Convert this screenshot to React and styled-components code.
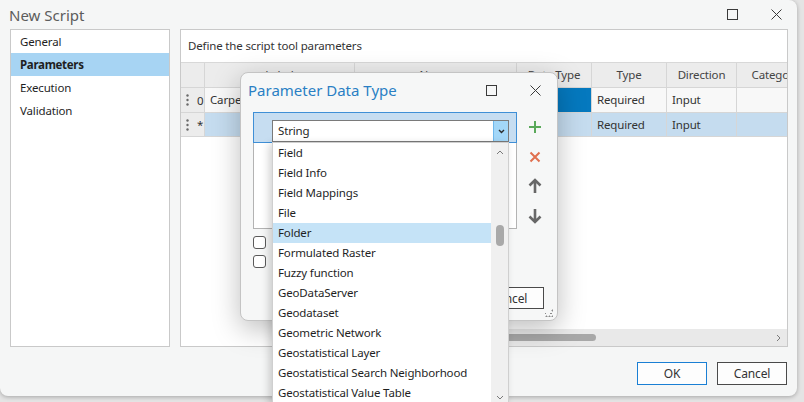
import React from "react";
import { createGlobalStyle, styled } from "styled-components";

const GlobalStyle = createGlobalStyle`
  html, body {
    margin: 0;
    padding: 0;
  }
  body {
    background: #e4e4e4;
    font-family: "Noto Sans", "Open Sans", sans-serif;
    font-size: 11.5px;
    letter-spacing: -0.15px;
    color: #1f1f1f;
  }
`;

const COLUMNS = [
  { title: "Label", width: 150 },
  { title: "Name", width: 162 },
  { title: "Data Type", width: 75 },
  { title: "Type", width: 75 },
  { title: "Direction", width: 70 },
  { title: "Category", width: 78 },
];

const ROWS = [
  { id: "0", cells: ["Carpeta", "", "", "Required", "Input", ""], selected: false },
  { id: "*", cells: ["", "", "", "Required", "Input", ""], selected: true },
];

const DATA_TYPES = [
  "Field",
  "Field Info",
  "Field Mappings",
  "File",
  "Folder",
  "Formulated Raster",
  "Fuzzy function",
  "GeoDataServer",
  "Geodataset",
  "Geometric Network",
  "Geostatistical Layer",
  "Geostatistical Search Neighborhood",
  "Geostatistical Value Table",
];

const NAV = ["General", "Parameters", "Execution", "Validation"];

const gridTemplate = `24px ${COLUMNS.map((c) => `${c.width}px`).join(" ")}`;

const App = () => {
  return (
    <Page>
      <GlobalStyle />
      <Window>
        <TitleBar>
          <Title>New Script</Title>
          <WindowControls>
            <MaximizeIcon />
            <CloseIcon />
          </WindowControls>
        </TitleBar>

        <Body>
          <Nav>
            {NAV.map((item) => (
              <NavItem key={item} $active={item === "Parameters"}>
                {item}
              </NavItem>
            ))}
          </Nav>

          <Panel>
            <Caption>Define the script tool parameters</Caption>
            <Grid>
              <HeaderCell />
              {COLUMNS.map((c) => (
                <HeaderCell key={c.title}>{c.title}</HeaderCell>
              ))}
              {ROWS.map((row) => (
                <React.Fragment key={row.id}>
                  <HandleCell $tall={!row.selected}>
                    <DotsIcon />
                    <span>{row.id}</span>
                  </HandleCell>
                  {row.cells.map((text, i) => (
                    <Cell
                      key={i}
                      $tall={!row.selected}
                      $selected={row.selected}
                      $focused={!row.selected && i === 2}
                    >
                      {text}
                    </Cell>
                  ))}
                </React.Fragment>
              ))}
            </Grid>
            <GridFill />
            <HScroll>
              <HThumb />
              <ChevronRight />
            </HScroll>
          </Panel>
        </Body>

        <Footer>
          <Button $primary>OK</Button>
          <Button>Cancel</Button>
        </Footer>
      </Window>

      <Dialog>
        <DialogTitleBar>
          <DialogTitle>Parameter Data Type</DialogTitle>
          <WindowControls>
            <MaximizeIcon />
            <CloseIcon />
          </WindowControls>
        </DialogTitleBar>

        <DialogBody>
          <ListColumn>
            <ListBox>
              <ListRow>
                <Combo>
                  <ComboText>String</ComboText>
                  <ComboButton>
                    <ChevronDown />
                  </ComboButton>
                </Combo>
              </ListRow>
            </ListBox>
            <CheckBox />
            <CheckBox />
          </ListColumn>

          <ToolColumn>
            <ToolSlot>
              <PlusIcon />
            </ToolSlot>
            <ToolSlot>
              <DeleteIcon />
            </ToolSlot>
            <ToolSlot>
              <ArrowIcon />
            </ToolSlot>
            <ToolSlot>
              <ArrowIcon $down />
            </ToolSlot>
          </ToolColumn>
        </DialogBody>

        <DialogFooter>
          <SmallButton $primary>OK</SmallButton>
          <SmallButton>Cancel</SmallButton>
        </DialogFooter>
        <Grip />

        <Dropdown>
          <DropList>
            {DATA_TYPES.map((t) => (
              <DropItem key={t} $active={t === "Folder"}>
                {t}
              </DropItem>
            ))}
          </DropList>
          <VScroll>
            <ChevronUp />
            <VThumb />
            <ChevronDownSmall />
          </VScroll>
        </Dropdown>
      </Dialog>
    </Page>
  );
};

/* icons */

const MaximizeIcon = () => (
  <svg width="11" height="11" viewBox="0 0 11 11">
    <rect x="0.5" y="0.5" width="10" height="10" fill="none" stroke="#3a3a3a" strokeWidth="1" />
  </svg>
);

const CloseIcon = () => (
  <svg width="11" height="11" viewBox="0 0 11 11">
    <path d="M0.5 0.5 L10.5 10.5 M10.5 0.5 L0.5 10.5" stroke="#3a3a3a" strokeWidth="1" />
  </svg>
);

const DotsIcon = () => (
  <svg width="3" height="12" viewBox="0 0 3 12">
    <circle cx="1.5" cy="1.5" r="1.2" fill="#6a6a6a" />
    <circle cx="1.5" cy="6" r="1.2" fill="#6a6a6a" />
    <circle cx="1.5" cy="10.5" r="1.2" fill="#6a6a6a" />
  </svg>
);

const ChevronDown = () => (
  <svg width="7" height="5" viewBox="0 0 7 5">
    <path d="M1 1 L3.5 3.5 L6 1" fill="none" stroke="#2b2b2b" strokeWidth="1.4" />
  </svg>
);

const ChevronUp = () => (
  <svg width="8" height="5" viewBox="0 0 8 5" style={{ marginTop: 7 }}>
    <path d="M1 4 L4 1 L7 4" fill="none" stroke="#7a7a7a" strokeWidth="1" />
  </svg>
);

const ChevronDownSmall = () => (
  <svg width="8" height="5" viewBox="0 0 8 5" style={{ marginBottom: 3 }}>
    <path d="M1 1 L4 4 L7 1" fill="none" stroke="#7a7a7a" strokeWidth="1" />
  </svg>
);

const ChevronRight = () => (
  <svg width="5" height="8" viewBox="0 0 5 8">
    <path d="M1 1 L4 4 L1 7" fill="none" stroke="#7a7a7a" strokeWidth="1" />
  </svg>
);

const PlusIcon = () => (
  <svg width="14" height="14" viewBox="0 0 14 14">
    <path d="M7 1 V13 M1 7 H13" stroke="#5aa95a" strokeWidth="2" />
  </svg>
);

const DeleteIcon = () => (
  <svg width="12" height="12" viewBox="0 0 12 12">
    <path d="M1.5 1.5 L10.5 10.5 M10.5 1.5 L1.5 10.5" stroke="#e0704f" strokeWidth="2" />
  </svg>
);

const ArrowIcon = ({ $down }) => (
  <svg
    width="14"
    height="16"
    viewBox="0 0 14 16"
    style={{ transform: $down ? "rotate(180deg)" : "none" }}
  >
    <path d="M7 15 V2 M1.5 7.5 L7 2 L12.5 7.5" fill="none" stroke="#676767" strokeWidth="2.6" />
  </svg>
);

/* main window */

const Page = styled.div`
  position: relative;
  width: 804px;
  height: 402px;
  overflow: hidden;
`;

const Window = styled.div`
  width: 797px;
  height: 396px;
  background: #f5f6f6;
  border-radius: 0 8px 8px 8px;
  box-shadow: 0 1px 4px rgba(0, 0, 0, 0.28);
  display: flex;
  flex-direction: column;
  box-sizing: border-box;
`;

const TitleBar = styled.div`
  height: 29px;
  display: flex;
  align-items: center;
  padding: 0 15px 0 9px;
`;

const Title = styled.div`
  flex: 1;
  font-size: 15px;
  letter-spacing: 0;
  color: #5c5c5c;
`;

const WindowControls = styled.div`
  display: flex;
  align-items: center;
  gap: 33px;

  svg {
    display: block;
  }
`;

const Body = styled.div`
  display: flex;
  gap: 10px;
  padding: 0 9px 0 10px;
  height: 318px;
`;

const Nav = styled.div`
  width: 160px;
  box-sizing: border-box;
  background: #fff;
  border: 1px solid #c9c9c9;
`;

const NavItem = styled.div`
  height: 23px;
  line-height: 23px;
  padding-left: 9px;
  font-weight: ${(p) => (p.$active ? 700 : 400)};
  letter-spacing: ${(p) => (p.$active ? "-0.3px" : "-0.15px")};
  background: ${(p) => (p.$active ? "#a7d4f3" : "transparent")};
`;

const Panel = styled.div`
  flex: 1;
  min-width: 0;
  background: #fff;
  border: 1px solid #c9c9c9;
  display: flex;
  flex-direction: column;
  overflow: hidden;
`;

const Caption = styled.div`
  height: 32px;
  line-height: 32px;
  padding-left: 7px;
  color: #333;
  border-bottom: 1px solid #d8d8d8;
`;

const Grid = styled.div`
  display: grid;
  grid-template-columns: ${gridTemplate};
  width: max-content;
`;

const HeaderCell = styled.div`
  height: 24px;
  line-height: 24px;
  text-align: center;
  background: #ececec;
  color: #444;
  border-right: 1px solid #d6d6d6;
  border-bottom: 1px solid #d6d6d6;
  white-space: nowrap;
  overflow: hidden;
`;

const HandleCell = styled.div`
  height: ${(p) => (p.$tall ? 24 : 23)}px;
  display: flex;
  align-items: center;
  gap: 8px;
  padding-left: 5px;
  background: #ececec;
  color: #333;
  border-right: 1px solid #d6d6d6;
  border-bottom: 1px solid #d6d6d6;

  svg {
    display: block;
  }
`;

const Cell = styled.div`
  height: ${(p) => (p.$tall ? 24 : 23)}px;
  line-height: ${(p) => (p.$tall ? 24 : 23)}px;
  padding-left: 5px;
  color: #333;
  white-space: nowrap;
  overflow: hidden;
  background: ${(p) => (p.$focused ? "#0579bf" : p.$selected ? "#c5dcef" : "#f8f8f8")};
  border-right: 1px solid #d6d6d6;
  border-bottom: 1px solid #d6d6d6;
`;

const GridFill = styled.div`
  flex: 1;
`;

const HScroll = styled.div`
  height: 17px;
  margin-left: 100px;
  background: #e9e9e9;
  display: flex;
  align-items: center;
  padding: 0 6px 0 10px;

  svg {
    display: block;
    margin-left: auto;
  }
`;

const HThumb = styled.div`
  width: 305px;
  height: 7px;
  border-radius: 4px;
  background: #a8a8a8;
`;

const Footer = styled.div`
  display: flex;
  justify-content: flex-end;
  gap: 10px;
  padding: 15px 10px 0 0;
`;

const Button = styled.div`
  width: 70px;
  height: 23px;
  box-sizing: border-box;
  display: flex;
  align-items: center;
  justify-content: center;
  background: #fdfdfd;
  border: 1px solid ${(p) => (p.$primary ? "#1a7fd4" : "#4a4a4a")};
  font-size: 12px;
  color: #333;
`;

/* data type dialog */

const Dialog = styled.div`
  position: absolute;
  left: 240px;
  top: 72px;
  width: 318px;
  height: 249px;
  box-sizing: border-box;
  background: #f6f7f7;
  border: 1px solid #c4c4c4;
  border-radius: 8px;
  box-shadow: 0 8px 28px rgba(0, 0, 0, 0.26);
  display: flex;
  flex-direction: column;
`;

const DialogTitleBar = styled.div`
  height: 34px;
  display: flex;
  align-items: center;
  padding: 0 16px 0 7px;
`;

const DialogTitle = styled.div`
  flex: 1;
  font-size: 15px;
  letter-spacing: 0;
  color: #2a7fc4;
`;

const DialogBody = styled.div`
  display: flex;
  padding: 5px 0 0 12px;
`;

const ListColumn = styled.div`
  display: flex;
  flex-direction: column;
  gap: 6px;
`;

const ListBox = styled.div`
  width: 264px;
  height: 117px;
  box-sizing: border-box;
  background: #fff;
  border: 1px solid #b3b3b3;
  margin-bottom: 1px;
`;

const ListRow = styled.div`
  height: 31px;
  margin: -1px -1px 0;
  box-sizing: border-box;
  background: #c6ddf1;
  border: 1px solid #3f8fd6;
  padding: 7px 0 0 18px;
`;

const Combo = styled.div`
  width: 237px;
  height: 22px;
  box-sizing: border-box;
  background: #fff;
  border: 1px solid #7a7a7a;
  display: flex;
`;

const ComboText = styled.div`
  flex: 1;
  padding-left: 5px;
  line-height: 20px;
`;

const ComboButton = styled.div`
  width: 14px;
  background: #a3d7f8;
  border-left: 1px solid #6fb8ec;
  display: flex;
  align-items: center;
  justify-content: center;
`;

const CheckBox = styled.div`
  width: 13px;
  height: 13px;
  box-sizing: border-box;
  border: 1px solid #5a5a5a;
  border-radius: 3px;
  background: #fff;
`;

const ToolColumn = styled.div`
  width: 16px;
  margin-left: 10px;
  padding-top: 7px;
  display: flex;
  flex-direction: column;
  gap: 13.5px;
`;

const ToolSlot = styled.div`
  height: 16px;
  display: flex;
  align-items: center;
  justify-content: center;

  svg {
    display: block;
  }
`;

const DialogFooter = styled.div`
  margin-top: auto;
  display: flex;
  justify-content: flex-end;
  gap: 10px;
  padding: 0 13px 11px 0;
`;

const SmallButton = styled(Button)`
  height: 22px;
`;

const Grip = styled.div`
  position: absolute;
  right: 4px;
  bottom: 3px;
  width: 8px;
  height: 8px;
  background:
    radial-gradient(circle, #8a8a8a 0.9px, transparent 1.1px) 6px 0 / 3px 3px no-repeat,
    radial-gradient(circle, #8a8a8a 0.9px, transparent 1.1px) 3px 3px / 6px 3px repeat-x,
    radial-gradient(circle, #8a8a8a 0.9px, transparent 1.1px) 0 6px / 3px 3px repeat-x;
`;

const Dropdown = styled.div`
  position: absolute;
  left: 31px;
  top: 69px;
  width: 237px;
  height: 262px;
  box-sizing: border-box;
  background: #fff;
  border: 1px solid #cfcfcf;
  box-shadow: -3px 2px 8px rgba(0, 0, 0, 0.18);
  display: flex;
`;

const DropList = styled.div`
  flex: 1;
`;

const DropItem = styled.div`
  height: 20px;
  line-height: 20px;
  padding-left: 5px;
  white-space: nowrap;
  background: ${(p) => (p.$active ? "#c5e3f7" : "transparent")};
`;

const VScroll = styled.div`
  width: 17px;
  background: #f0f0f0;
  display: flex;
  flex-direction: column;
  align-items: center;

  svg {
    display: block;
  }
`;

const VThumb = styled.div`
  width: 8px;
  height: 21px;
  margin-top: 70px;
  margin-bottom: auto;
  border-radius: 4px;
  background: #a9a9a9;
`;

export default App;
